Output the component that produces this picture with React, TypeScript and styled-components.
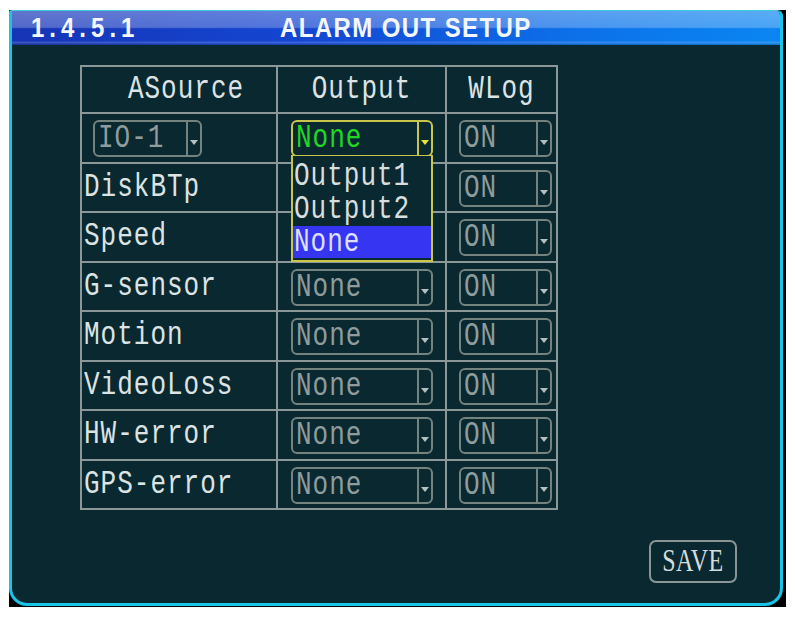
import React from 'react';
import styled, { createGlobalStyle } from 'styled-components';

const GlobalStyle = createGlobalStyle`
    body {
        margin: 0;
        background: #ffffff;
    }
`;

const Screen = styled.div`
    box-sizing: border-box;
    width: 795px;
    height: 620px;
    padding: 10px 0 0 9px;
    background: #ffffff;
`;

const Frame = styled.div`
    box-sizing: border-box;
    width: 777px;
    height: 597px;
    padding: 0 3px 1px 0;
    background: #000000;
`;

const Panel = styled.div`
    box-sizing: border-box;
    display: flex;
    flex-direction: column;
    height: 100%;
    border: 3px solid #19c4e6;
    border-top: 1px solid #3fc8d8;
    border-radius: 2px 6px 18px 18px;
    background: #0a2830;
    overflow: hidden;
`;

const TitleBar = styled.div`
    display: flex;
    align-items: center;
    height: 34px;
    padding-left: 19px;
    background:
        linear-gradient(
            180deg,
            rgba(255, 255, 255, 0.32) 0%,
            rgba(255, 255, 255, 0.26) 48%,
            rgba(255, 255, 255, 0) 52%,
            rgba(255, 255, 255, 0) 88%,
            rgba(255, 255, 255, 0.18) 92%,
            rgba(0, 0, 0, 0.15) 100%
        ),
        linear-gradient(90deg, #1634b6 0%, #1448d4 40%, #0c72ea 75%, #0a86f2 100%);
    color: #f4f7ff;
    font-family: 'Liberation Sans', Arial, sans-serif;
    font-weight: bold;
    font-size: 24px;
`;

const MenuNumber = styled.span<{ $width: number }>`
    display: inline-block;
    width: ${(p) => p.$width}px;
    letter-spacing: 5px;
    transform: scaleY(1.15);
`;

const MenuTitle = styled.span`
    display: inline-block;
    letter-spacing: 1.4px;
    transform: scaleY(1.15);
`;

const Body = styled.div`
    display: flex;
    flex: 1;
    flex-direction: column;
    padding: 20px 0 20px 68px;
`;

const Grid = styled.div`
    display: grid;
    grid-template-columns: 196px 169px 111px;
    grid-template-rows: 47px repeat(8, 49.5px);
    width: max-content;
    border-top: 2px solid #8c9797;
    border-left: 2px solid #8c9797;
`;

const Cell = styled.div<{ $head?: boolean; $pad?: number }>`
    position: relative;
    box-sizing: border-box;
    display: flex;
    align-items: center;
    justify-content: ${(p) => (p.$head ? 'center' : 'flex-start')};
    padding-left: ${(p) => p.$pad ?? 0}px;
    border-right: 2px solid #8c9797;
    border-bottom: 2px solid #8c9797;
    color: #dce3e3;
`;

const Glyphs = styled.span<{ $color?: string }>`
    display: inline-block;
    color: ${(p) => p.$color ?? 'inherit'};
    font-family: 'Liberation Mono', 'Courier New', monospace;
    font-size: 26px;
    letter-spacing: 1px;
    line-height: 0.8;
    white-space: nowrap;
    transform: scaleY(1.25);
`;

const Select = styled.div<{ $width: number; $active?: boolean }>`
    position: relative;
    box-sizing: border-box;
    display: flex;
    width: ${(p) => p.$width}px;
    height: 37px;
    margin-top: 2px;
    border: 2px solid ${(p) => (p.$active ? '#c9c44a' : '#75837f')};
    border-radius: 6px;
`;

const SelectValue = styled.div`
    display: flex;
    flex: 1;
    align-items: center;
    padding-left: 3px;
`;

const SelectButton = styled.div<{ $active?: boolean }>`
    display: flex;
    align-items: center;
    justify-content: center;
    width: 14px;
    padding-top: 8px;
    box-sizing: border-box;
    border-left: 2px solid ${(p) => (p.$active ? '#c9c44a' : '#75837f')};
`;

const Arrow = styled.span<{ $active?: boolean }>`
    width: 0;
    height: 0;
    border-left: 4px solid transparent;
    border-right: 4px solid transparent;
    border-top: 5px solid ${(p) => (p.$active ? '#e6e23c' : '#b4c0c0')};
`;

const OptionList = styled.div`
    position: absolute;
    top: 100%;
    left: -2px;
    right: -2px;
    z-index: 2;
    box-sizing: border-box;
    display: flex;
    flex-direction: column;
    height: 107px;
    padding: 4px 0 2px;
    border: 2px solid #c9c44a;
    border-top-width: 1px;
    background: #0a2830;
`;

const Option = styled.div<{ $selected?: boolean }>`
    display: flex;
    flex: 1;
    align-items: center;
    padding-left: 1px;
    background: ${(p) => (p.$selected ? '#3535f2' : 'transparent')};
    color: ${(p) => (p.$selected ? '#dde0ff' : '#d8dede')};
`;

const Footer = styled.div`
    display: flex;
    justify-content: flex-end;
    margin-top: auto;
    padding-right: 43px;
`;

const SaveButton = styled.button`
    box-sizing: border-box;
    width: 88px;
    height: 43px;
    padding: 0;
    border: 2px solid #8a9696;
    border-radius: 7px;
    background: transparent;
    color: #d6dcdc;
    font-family: 'Liberation Serif', 'Times New Roman', serif;
    font-size: 24px;
    letter-spacing: 0.5px;

    span {
        display: inline-block;
        transform: scaleY(1.3);
    }
`;

const DIM = '#8e9c9c';

const Dropdown = ({
    value,
    width,
    active,
    options,
}: {
    value: string;
    width: number;
    active?: boolean;
    options?: string[];
}) => (
    <Select $width={width} $active={active}>
        <SelectValue>
            <Glyphs $color={active ? '#22d626' : DIM}>{value}</Glyphs>
        </SelectValue>
        <SelectButton $active={active}>
            <Arrow $active={active} />
        </SelectButton>
        {options && (
            <OptionList>
                {options.map((o) => (
                    <Option key={o} $selected={o === value}>
                        <Glyphs>{o}</Glyphs>
                    </Option>
                ))}
            </OptionList>
        )}
    </Select>
);

// rows whose Output cell sits under the open option list
const sources = [
    { name: 'DiskBTp', covered: true },
    { name: 'Speed', covered: true },
    { name: 'G-sensor' },
    { name: 'Motion' },
    { name: 'VideoLoss' },
    { name: 'HW-error' },
    { name: 'GPS-error' },
];

export default function App() {
    return (
        <Screen>
            <GlobalStyle />
            <Frame>
                <Panel>
                    <TitleBar>
                        <MenuNumber $width={249}>1.4.5.1</MenuNumber>
                        <MenuTitle>ALARM OUT SETUP</MenuTitle>
                    </TitleBar>
                    <Body>
                        <Grid>
                            <Cell $head $pad={14}>
                                <Glyphs>ASource</Glyphs>
                            </Cell>
                            <Cell $head>
                                <Glyphs>Output</Glyphs>
                            </Cell>
                            <Cell $head>
                                <Glyphs>WLog</Glyphs>
                            </Cell>

                            <Cell $pad={11}>
                                <Dropdown value="IO-1" width={109} />
                            </Cell>
                            <Cell $pad={13}>
                                <Dropdown
                                    value="None"
                                    width={142}
                                    active
                                    options={['Output1', 'Output2', 'None']}
                                />
                            </Cell>
                            <Cell $pad={12}>
                                <Dropdown value="ON" width={93} />
                            </Cell>

                            {sources.map((s) => (
                                <React.Fragment key={s.name}>
                                    <Cell $pad={2}>
                                        <Glyphs>{s.name}</Glyphs>
                                    </Cell>
                                    <Cell $pad={13}>
                                        {!s.covered && <Dropdown value="None" width={142} />}
                                    </Cell>
                                    <Cell $pad={12}>
                                        <Dropdown value="ON" width={93} />
                                    </Cell>
                                </React.Fragment>
                            ))}
                        </Grid>
                        <Footer>
                            <SaveButton>
                                <span>SAVE</span>
                            </SaveButton>
                        </Footer>
                    </Body>
                </Panel>
            </Frame>
        </Screen>
    );
}
